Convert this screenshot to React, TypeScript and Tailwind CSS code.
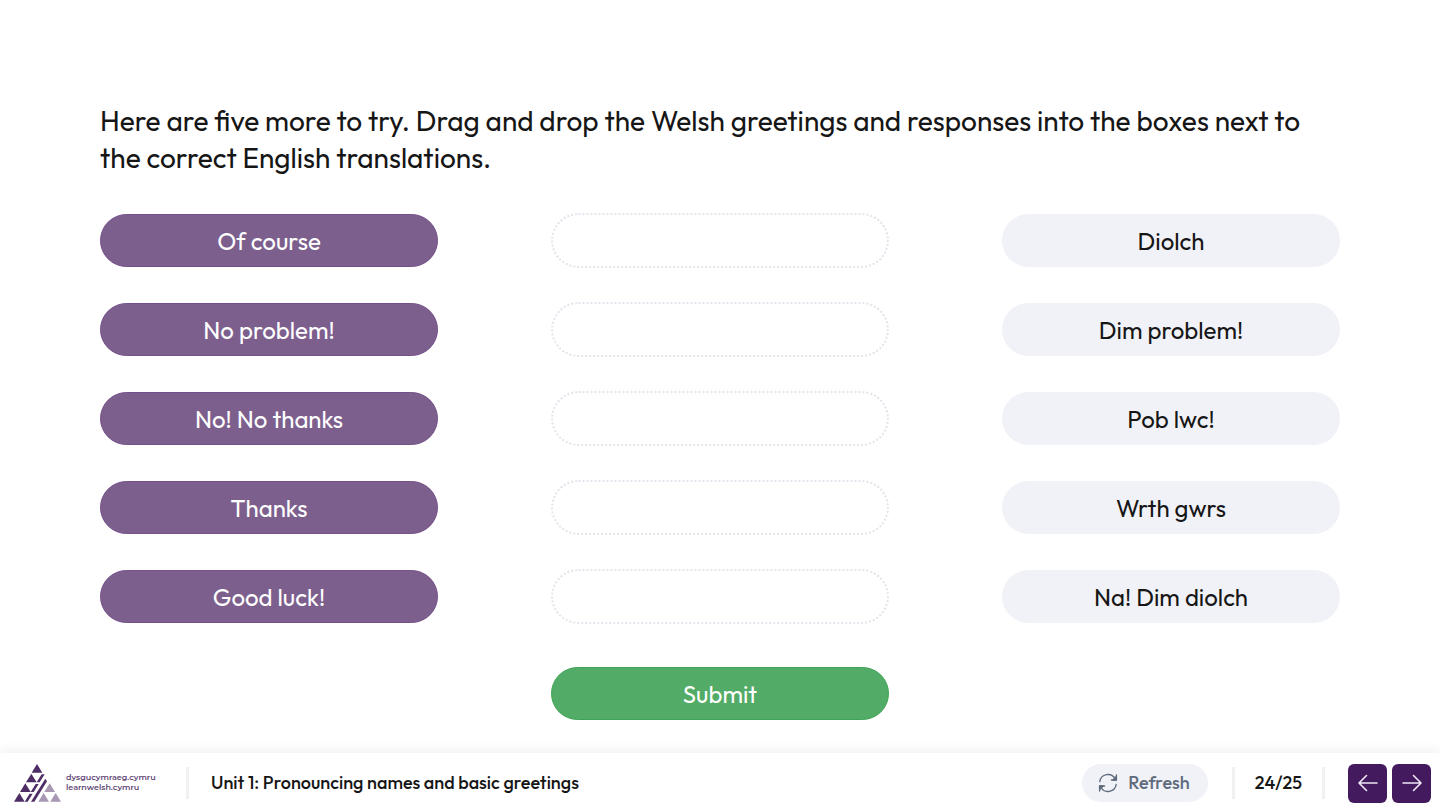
import { useState } from "react";

const prompts = ["Of course", "No problem!", "No! No thanks", "Thanks", "Good luck!"];
const answers = ["Diolch", "Dim problem!", "Pob lwc!", "Wrth gwrs", "Na! Dim diolch"];

function Logo() {
  return (
    <svg viewBox="0 0 141 114" className="h-[38px] w-[47px] shrink-0" aria-hidden="true">
      <g fill="#4e2d66">
        <path d="M69 0 85 26H53Z" />
        <path d="M52 29 68 55H36Z" />
        <path d="M34 58 50 84H18Z" />
        <path d="M16 87 32 113H0Z" />
        <path d="M83 31H92L77 55H68Z" />
        <path d="M65 60H74L59 84H50Z" />
        <path d="M47 89H56L41 113H32Z" />
        <path d="M94 44 99 52 61 113H51Z" />
      </g>
      <g fill="#a797b3">
        <path d="M107 58 123 84H91Z" />
        <path d="M89 87 105 113H73Z" />
        <path d="M125 87 141 113H109Z" />
      </g>
    </svg>
  );
}

function RefreshIcon() {
  return (
    <svg
      viewBox="0 0 20 20"
      className="size-5 shrink-0"
      fill="none"
      stroke="currentColor"
      strokeWidth="1.3"
      strokeLinecap="round"
      strokeLinejoin="round"
      aria-hidden="true"
    >
      <path d="M1.8 8.6a8.2 8.2 0 0 1 15.3-2.8M18.2 11.4a8.2 8.2 0 0 1-15.3 2.8" />
      <path d="M18.4 2v5h-5M1.6 18v-5h5" />
      <path d="M18.400 3.500V7h-3.500ZM1.600 16.500V13h3.500Z" fill="currentColor" />
    </svg>
  );
}

function Arrow({ d }: { d: string }) {
  return (
    <svg
      viewBox="0 0 20 18"
      className="h-[18px] w-5"
      fill="none"
      stroke="#eee6f4"
      strokeWidth="1.6"
      strokeLinecap="round"
      strokeLinejoin="round"
      aria-hidden="true"
    >
      <path d={d} />
    </svg>
  );
}

export default function App() {
  const [slots, setSlots] = useState<string[]>(["", "", "", "", ""]);

  const drop = (index: number, word: string) =>
    setSlots((current) => current.map((value, i) => (i === index ? word : value)));

  return (
    <div className="flex min-h-screen flex-col bg-white font-['Outfit','Lato',sans-serif] text-[#161616]">
      <main className="flex-1 px-[100px] pt-[102px] pb-[33px]">
        <h1 className="text-[28px] leading-[37px] font-normal">
          Here are five more to try. Drag and drop the Welsh greetings and responses into the boxes next to the
          correct English translations.
        </h1>

        <div className="mt-[38px] grid grid-cols-3 gap-x-[113px] gap-y-9 text-2xl">
          {prompts.map((prompt, i) => (
            <div key={prompt} className="contents">
              <div className="flex h-[53px] items-center justify-center rounded-full border border-[#74508a] bg-[#7d5f8e] text-white">
                {prompt}
              </div>
              <div
                className="-my-px flex h-[55px] items-center justify-center rounded-full border-2 border-dotted border-[#e4e5ec]"
                onDragOver={(e) => e.preventDefault()}
                onDrop={(e) => drop(i, e.dataTransfer.getData("text/plain"))}
              >
                {slots[i]}
              </div>
              <button
                type="button"
                draggable
                onDragStart={(e) => e.dataTransfer.setData("text/plain", answers[i])}
                className="h-[53px] cursor-grab rounded-full bg-[#f1f2f7]"
              >
                {answers[i]}
              </button>
            </div>
          ))}
        </div>

        <div className="mt-11 grid grid-cols-3 gap-x-[113px]">
          <button
            type="button"
            className="col-start-2 h-[53px] rounded-full border border-[#3fa455] bg-[#52ab66] text-2xl text-white"
          >
            Submit
          </button>
        </div>
      </main>

      <footer className="flex h-[57px] items-center bg-white pt-[3px] pr-[9px] pl-[14px] shadow-[0_0_14px_rgba(0,0,0,0.09)]">
        <a href="#home" className="flex items-center gap-[5px] text-[#5f4675]">
          <Logo />
          <span className="w-[96px] pb-[2px] font-['Montserrat','Open_Sans',sans-serif] text-[8px] leading-[10px] font-semibold">
            dysgucymraeg.cymru
            <br />
            learnwelsh.cymru
          </span>
        </a>
        <span className="ml-6 h-8 w-[3px] bg-[#f1f1f1]" />
        <h2 className="ml-[22px] text-lg font-medium">Unit 1: Pronouncing names and basic greetings</h2>
        <div className="ml-auto flex items-center">
          <button
            type="button"
            className="flex h-[38px] items-center gap-[10px] rounded-full bg-[#f1f2f7] pr-[18px] pl-4 text-lg font-medium text-[#5f6b7d]"
          >
            <RefreshIcon />
            Refresh
          </button>
          <span className="ml-6 h-8 w-[3px] bg-[#f1f1f1]" />
          <span className="px-5 text-lg font-medium">24/25</span>
          <span className="mr-[23px] h-8 w-[3px] bg-[#f1f1f1]" />
          <div className="flex gap-[5px]">
            <button
              type="button"
              aria-label="Previous"
              className="flex size-[39px] items-center justify-center rounded-md bg-[#441a5e]"
            >
              <Arrow d="M19 9H1M8.5 1.5 1 9l7.5 7.5" />
            </button>
            <button
              type="button"
              aria-label="Next"
              className="flex size-[39px] items-center justify-center rounded-md bg-[#441a5e]"
            >
              <Arrow d="M1 9h18M11.5 1.5 19 9l-7.5 7.5" />
            </button>
          </div>
        </div>
      </footer>
    </div>
  );
}
